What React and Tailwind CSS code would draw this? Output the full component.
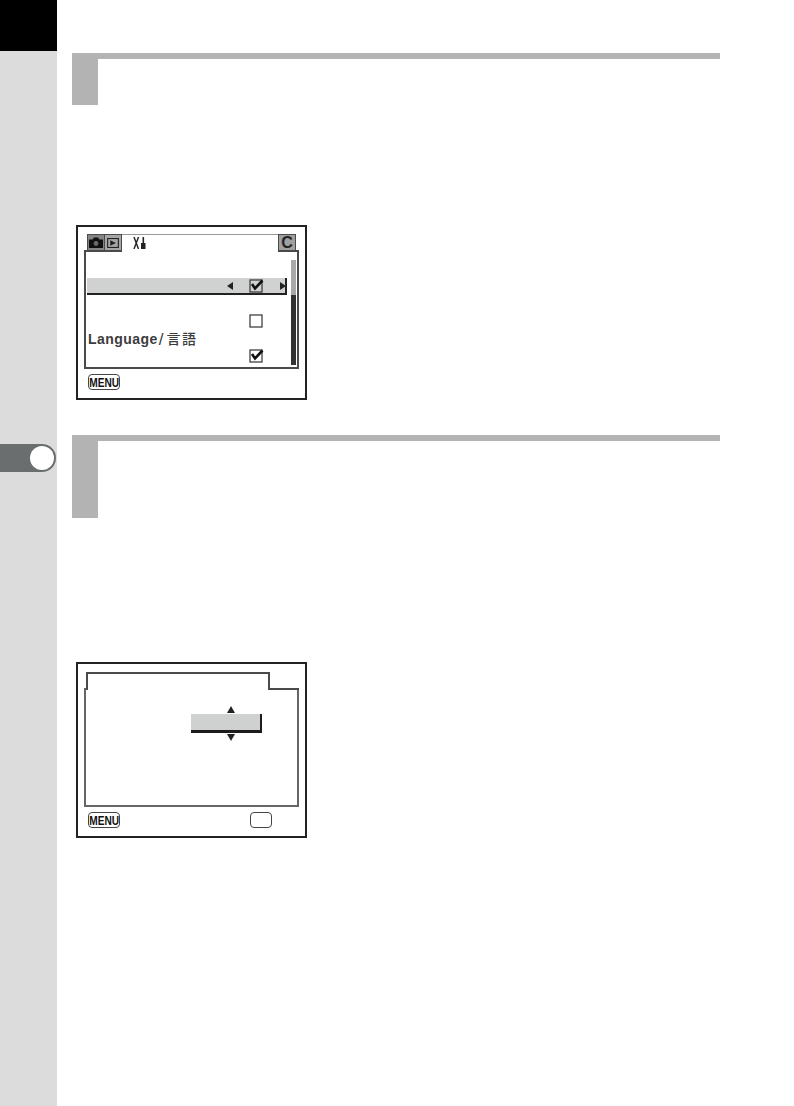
import React from "react";

const settingRows = [
  { id: 1 },
  { id: 2, selected: true, checked: true, hasBox: true },
  { id: 3 },
  { id: 4, hasBox: true },
  { id: 5, label: true },
  { id: 6, checked: true, hasBox: true },
];

function SectionHeading({ height }) {
  return (
    <div className={`w-[648px] border-t-[6px] border-[#b3b3b3] ${height}`}>
      <div className="h-full w-[26px] bg-[#b3b3b3]" />
    </div>
  );
}

function Triangle({ direction }) {
  const points = {
    left: "6,0 6,8 0,4",
    right: "0,0 6,4 0,8",
    up: "4,0 8,7 0,7",
    down: "0,0 8,0 4,7",
  };
  const vertical = direction === "up" || direction === "down";
  return (
    <svg width={vertical ? 8 : 6} height={vertical ? 7 : 8} className="block shrink-0">
      <polygon points={points[direction]} fill="#222" />
    </svg>
  );
}

function CheckBox({ checked }) {
  return (
    <svg width="15" height="14" viewBox="0 0 15 14" className="block shrink-0 overflow-visible">
      <rect x="1" y="1" width="12" height="12" fill="none" stroke="#3a3a3a" strokeWidth="1.25" />
      {checked ? (
        <path d="M3 5 L6 9.5 L13.5 1.5" fill="none" stroke="#111" strokeWidth="2.6" />
      ) : null}
    </svg>
  );
}

function MenuButton() {
  return (
    <div className="flex h-4 w-8 items-center justify-center overflow-hidden rounded-[4px] border border-[#444] bg-white">
      <span className="inline-block scale-x-[0.78] font-['Liberation_Sans',sans-serif] text-[13px] leading-none font-bold text-[#111]">
        MENU
      </span>
    </div>
  );
}

function CameraIcon() {
  return (
    <svg width="14" height="11" viewBox="0 0 14 11">
      <path d="M0 2.5 H3.5 L5 0.5 H9 L10.5 2.5 H14 V11 H0 Z" fill="#111" />
      <circle cx="7" cy="6.5" r="2.4" fill="#6b6b6b" />
    </svg>
  );
}

function PlayIcon() {
  return (
    <svg width="12" height="10" viewBox="0 0 13 11">
      <rect x="0.6" y="0.6" width="11.8" height="9.8" fill="none" stroke="#222" strokeWidth="1.2" />
      <polygon points="3.5,2.5 9.8,5.5 3.5,8.5" fill="#222" />
    </svg>
  );
}

function ToolsIcon() {
  return (
    <svg width="13" height="12" viewBox="0 0 13 12">
      <path d="M1 0 L5.5 12 M5.5 0 L1 12" stroke="#222" strokeWidth="1.4" fill="none" />
      <rect x="9.5" y="0" width="1.6" height="6" fill="#222" />
      <rect x="8" y="6" width="4.5" height="6" fill="#222" />
    </svg>
  );
}

function SettingRow({ row }) {
  const rowClass = row.selected
    ? "mb-[0.5px] h-[17px] border-[#222] bg-[#d0d2d1]"
    : "h-[17.5px] border-transparent";
  return (
    <div className={`flex w-[200px] items-center border-r-2 border-b-2 ${rowClass}`}>
      <div className="flex flex-1 items-center whitespace-nowrap pt-[2px] pl-[1px] font-['Liberation_Sans','Noto_Sans_CJK_JP',sans-serif] text-[14px] leading-none text-[#3c3c3c]">
        {row.label ? (
          <>
            <span className="font-bold tracking-[0.45px]">Language</span>
            <span className="ml-[1px] text-[17px] leading-none font-normal">/</span>
            <span className="ml-[3px] font-medium tracking-[1.5px]">言語</span>
          </>
        ) : null}
      </div>
      <div className="w-[6px]">{row.selected ? <Triangle direction="left" /> : null}</div>
      <div className="ml-[16px] w-[15px]">
        {row.hasBox ? <CheckBox checked={row.checked} /> : null}
      </div>
      <div className="ml-[16px] w-[5px]">{row.selected ? <Triangle direction="right" /> : null}</div>
    </div>
  );
}

function SettingsScreen() {
  return (
    <div className="ml-1 h-[175px] w-[231px] border-2 border-[#222] px-[6px] pt-[7px]">
      <div className="flex h-[18px] w-[215px]">
        <div className="h-0 w-[3px] self-end border-b-2 border-[#4a4a4a]" />
        <div className="flex w-[18px] items-center justify-center border border-b-2 border-[#4a4a4a] bg-[#858585]">
          <CameraIcon />
        </div>
        <div className="flex w-[17px] items-center justify-center border border-b-2 border-l-0 border-[#4a4a4a] bg-[#a6a6a6]">
          <PlayIcon />
        </div>
        <div className="flex-1 border-t border-[#999] pt-[2px] pl-[11px]">
          <ToolsIcon />
        </div>
        <div className="flex w-[18px] items-center justify-center border border-b-2 border-[#4a4a4a] bg-[#a0a0a0] font-['Liberation_Sans',sans-serif] text-[16px] font-bold text-[#222]">
          C
        </div>
        <div className="h-0 w-[3px] self-end border-b-2 border-[#4a4a4a]" />
      </div>
      <div className="flex h-[117px] w-[215px] border-x-2 border-b-2 border-[#4a4a4a] pt-[8.5px] pl-[1px]">
        <div>
          {settingRows.map((row) => (
            <SettingRow key={row.id} row={row} />
          ))}
        </div>
        <div className="mt-[-0.5px] ml-[4px] flex h-[105px] w-[5px] flex-col">
          <div className="h-[35px] bg-[#a8a8a8]" />
          <div className="flex-1 bg-[#333]" />
        </div>
      </div>
      <div className="mt-[5px] ml-[4px]">
        <MenuButton />
      </div>
    </div>
  );
}

function ValueScreen() {
  return (
    <div className="ml-1 h-[176px] w-[231px] border-2 border-[#222] px-[6px] pt-2">
      <div className="flex h-[18px] w-[215px] items-end">
        <div className="h-0 w-[2px] border-b-2 border-[#666]" />
        <div className="h-full w-[184px] border-x-2 border-t-2 border-[#4a4a4a]" />
        <div className="h-0 flex-1 border-b-2 border-[#4a4a4a]" />
      </div>
      <div className="flex h-[117px] w-[215px] flex-col items-start border-x-2 border-b-2 border-[#666] pt-4 pl-[105px]">
        <div className="ml-[36px]">
          <Triangle direction="up" />
        </div>
        <div className="mt-px h-[19px] w-[71px] border-r-2 border-b-[3px] border-[#1c1c1c] bg-[#cfd1d0]" />
        <div className="mt-px ml-[36px]">
          <Triangle direction="down" />
        </div>
      </div>
      <div className="mt-[5px] flex items-center pl-1">
        <MenuButton />
        <div className="ml-[130px] h-[16px] w-[22px] rounded-[4px] border border-[#444]" />
      </div>
    </div>
  );
}

export default function App() {
  return (
    <div className="flex h-[1106px] w-[794px] overflow-hidden bg-white">
      <aside className="flex w-[57px] flex-col bg-[#dcdcdc]">
        <div className="h-[51px] bg-black" />
        <div className="pt-[393px]">
          <div className="flex h-7 w-[56px] items-center justify-end rounded-r-full bg-[#6b6e6e] pr-[2px]">
            <div className="h-6 w-6 rounded-full bg-white" />
          </div>
        </div>
      </aside>
      <main className="pt-[53px] pl-[15px]">
        <SectionHeading height="h-[52px]" />
        <div className="mt-[120px]">
          <SettingsScreen />
        </div>
        <div className="mt-[35px]">
          <SectionHeading height="h-[83px]" />
        </div>
        <div className="mt-[144px]">
          <ValueScreen />
        </div>
      </main>
    </div>
  );
}
